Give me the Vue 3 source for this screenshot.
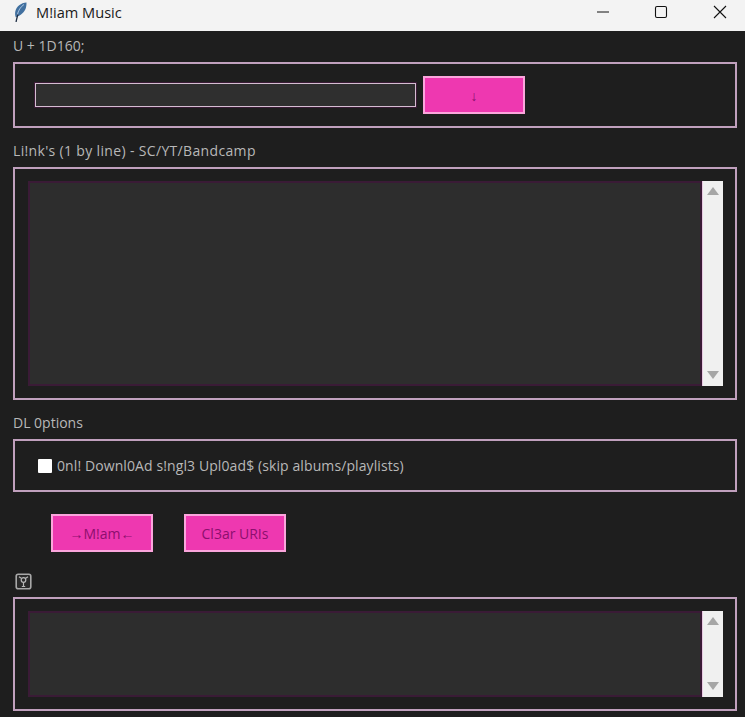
<script setup>
const title = 'M!iam Music'
</script>

<template>
  <div class="window">
    <header class="titlebar">
      <svg class="feather" viewBox="0 0 16 20" width="16" height="20">
        <path d="M14.500 .5C9 .8 4.300 4.500 3.300 9.500c-.4 2-.2 4 .4 5.700C8.500 14 12.800 10 14 5.500c.4-1.700.6-3.500.5-5z" fill="#41709f" />
        <path d="M12 2.500C8.500 4.800 6.200 8.500 5.200 13.500" fill="none" stroke="#b4cce6" stroke-width=".9" />
        <path d="M5.800 12.500 4 20" fill="none" stroke="#1f2f45" stroke-width="1.300" />
      </svg>
      <span class="title">{{ title }}</span>
      <div class="controls">
        <span class="ctl"><svg viewBox="0 0 14 14" width="14" height="14"><path d="M1 7h12" stroke="#111" stroke-width="1" /></svg></span>
        <span class="ctl"><svg viewBox="0 0 14 14" width="14" height="14"><rect x="1.500" y="1.500" width="11" height="11" rx="1.500" fill="none" stroke="#111" stroke-width="1.100" /></svg></span>
        <span class="ctl"><svg viewBox="0 0 14 14" width="14" height="14"><path d="M1 1l12 12M13 1 1 13" stroke="#111" stroke-width="1.100" /></svg></span>
      </div>
    </header>

    <main class="content">
      <div class="label">U + 1D160;</div>
      <section class="frame frame-url">
        <input class="url" type="text" />
        <button class="btn" type="button"><span class="glyph">↓</span></button>
      </section>

      <div class="label label-wide">Li!nk's (1 by line) - SC/YT/Bandcamp</div>
      <section class="frame frame-links">
        <div class="textbox">
          <textarea class="area"></textarea>
          <div class="scroll"><i class="arrow up"></i><i class="arrow down"></i></div>
        </div>
      </section>

      <div class="label">DL 0ptions</div>
      <section class="frame frame-opts">
        <label class="opt">
          <input class="check" type="checkbox" />
          <span>0nl! Downl0Ad s!ngl3 Upl0ad$ (skip albums/playlists)</span>
        </label>
      </section>

      <div class="actions">
        <button class="btn" type="button"><span class="glyph">→</span>M!am<span class="glyph">←</span></button>
        <button class="btn" type="button">Cl3ar URIs</button>
      </div>

      <div class="icon-label">
        <svg viewBox="0 0 17 17" width="17" height="17">
          <rect x="1.200" y="1.200" width="14.600" height="14.600" rx="2" fill="#2a2a2a" stroke="#a8a8a8" stroke-width="1.600" />
          <circle cx="8.500" cy="7" r="2.300" fill="none" stroke="#b8b8b8" stroke-width="1.200" />
          <path d="M8.500 9.300v4.200M6.800 13.500h3.400M4 3.800l2.700 1.700M13 3.800l-2.700 1.700" fill="none" stroke="#b8b8b8" stroke-width="1.200" />
        </svg>
      </div>
      <section class="frame frame-log">
        <div class="textbox">
          <textarea class="area"></textarea>
          <div class="scroll"><i class="arrow up"></i><i class="arrow down"></i></div>
        </div>
      </section>
    </main>
  </div>
</template>

<style>
html, body { margin: 0; background: #1e1e1e; }
</style>

<style scoped>
.window {
  width: 745px;
  height: 717px;
  overflow: hidden;
  background: #1e1e1e;
  font-family: "Open Sans", "Noto Sans", sans-serif;
  font-size: 14px;
  color: #b8b8b8;
}
.titlebar {
  box-sizing: border-box;
  height: 31px;
  background: #f3f3f3;
  display: flex;
  align-items: center;
  padding: 0 0 7px 12px;
}
.feather { flex: none; }
.title {
  margin-left: 8px;
  color: #1a1a1a;
  font-size: 14.600px;
}
.controls { margin-left: auto; margin-right: -4px; display: flex; }
.ctl {
  width: 58.500px;
  height: 24px;
  display: flex;
  align-items: center;
  justify-content: center;
}
.ctl svg { display: block; }
.content {
  padding: 5px 8px 0 13px;
}
.label {
  height: 20px;
  line-height: 20px;
  margin-bottom: 6px;
}
.label-wide { letter-spacing: .34px; }
.frame {
  box-sizing: border-box;
  border: 2px solid #c0a0bd;
  margin-bottom: 13px;
}
.frame-url {
  height: 66px;
  display: flex;
  align-items: center;
  gap: 7px;
  padding-left: 20px;
}
.url {
  box-sizing: border-box;
  width: 381px;
  height: 24px;
  border: 1.500px solid #d4bdd1;
  outline: 1px solid #3a1b36;
  background: #2f2f2f;
  padding: 0;
}
.btn {
  box-sizing: border-box;
  width: 102px;
  height: 38px;
  border: 2px solid #fba5dc;
  background: #ee38b0;
  color: #8c0f6e;
  font: inherit;
  padding: 0;
}
.glyph { font-family: "Liberation Sans", sans-serif; }
.frame-links { height: 233px; padding: 12px 12px 12px 13px; }
.frame-log { height: 114px; padding: 12px 12px 12px 13px; margin-bottom: 0; }
.textbox { display: flex; height: 100%; }
.area {
  flex: 1;
  box-sizing: border-box;
  min-width: 0;
  height: 100%;
  margin: 0;
  padding: 0;
  resize: none;
  border: 2px solid #3a1b36;
  outline: none;
  background: #2d2d2d;
  overflow: hidden;
}
.scroll {
  flex: none;
  box-sizing: border-box;
  width: 21px;
  background: #f0f0f0;
  border-left: 1px solid #e8c8e2;
  display: flex;
  flex-direction: column;
  justify-content: space-between;
  align-items: center;
  padding: 6px 0 7px;
}
.arrow {
  width: 0;
  height: 0;
  border-left: 6.500px solid transparent;
  border-right: 6.500px solid transparent;
}
.arrow.up { border-bottom: 8px solid #a6a6a6; }
.arrow.down { border-top: 8px solid #a6a6a6; }
.frame-opts {
  height: 53px;
  display: flex;
  align-items: center;
  padding-left: 23px;
}
.opt { display: flex; align-items: center; gap: 5px; letter-spacing: .1px; }
.check {
  appearance: none;
  width: 14px;
  height: 14px;
  margin: 0;
  background: #fff;
  border: 0;
  border-radius: 1px;
}
.actions {
  display: flex;
  gap: 31px;
  margin-top: 22px;
  padding-left: 38px;
}
.icon-label {
  height: 17px;
  margin: 21px 0 7px 2px;
}
.icon-label svg { display: block; }
</style>
